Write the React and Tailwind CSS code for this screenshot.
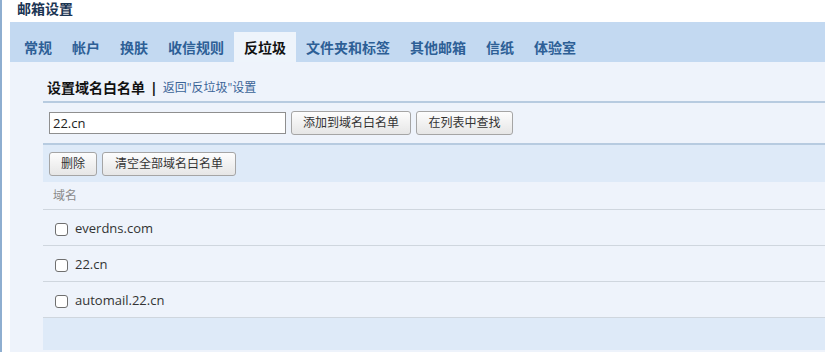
const TABS = ["常规", "帐户", "换肤", "收信规则", "反垃圾", "文件夹和标签", "其他邮箱", "信纸", "体验室"];
const DOMAINS = ["everdns.com", "22.cn", "automail.22.cn"];

function Btn({ children, className = "" }) {
  return (
    <button
      className={`h-[24px] px-0 whitespace-nowrap rounded-[3px] border border-[#a5a5a5] bg-gradient-to-b from-[#fdfdfd] to-[#e6e6e6] text-[12px] text-[#333] leading-none ${className}`}
    >
      {children}
    </button>
  );
}

export default function App() {
  return (
    <div
      className="w-[825px] h-[352px] overflow-hidden bg-white border-l-2 border-[#8eaed0] flex flex-col"
      style={{ fontFamily: '"Open Sans", "Noto Sans CJK SC", sans-serif' }}
    >
      <div className="h-[22px] pl-[15px] pt-[1px] text-[14px] leading-[16px] font-bold text-[#1b3553]">邮箱设置</div>

      <div className="ml-[8px] flex-1 flex flex-col">
        {/* tabs */}
        <div className="h-[40px] bg-[#c3d9f1] flex items-end pl-[4px]">
          {TABS.map((t) => (
            <div
              key={t}
              className={
                t === "反垃圾"
                  ? "h-[30px] px-[10px] flex items-center text-[14px] font-bold text-[#111] bg-[#eef4fb]"
                  : "h-[30px] px-[10px] flex items-center text-[14px] font-bold text-[#2d5f96]"
              }
            >
              {t}
            </div>
          ))}
        </div>

        {/* content */}
        <div className="flex-1 bg-[#eef3fb] pl-[33px]">
          <div className="h-[39px] pl-[4px] pt-[12px] flex items-center">
            <span className="text-[14px] font-bold text-[#111]">设置域名白名单</span>
            <span className="mx-[5px] text-[14px] font-bold text-[#111]">|</span>
            <span className="text-[12px] text-[#3a6497]">返回"反垃圾"设置</span>
          </div>
          <div className="h-[2px] bg-[#b7cbe0]" />

          <div className="h-[40px] pl-[6px] flex items-center gap-[5px]">
            <input
              defaultValue="22.cn"
              className="w-[237px] h-[22px] border border-[#8f8f8f] bg-white px-[3px] text-[13px] text-[#222] outline-none"
            />
            <Btn className="w-[120px]">添加到域名白名单</Btn>
            <Btn className="w-[97px]">在列表中查找</Btn>
          </div>
          <div className="h-[2px] bg-[#b7cbe0]" />

          <div className="h-[37px] bg-[#deeaf8] pl-[6px] flex items-center gap-[5px]">
            <Btn className="w-[48px]">删除</Btn>
            <Btn className="w-[134px]">清空全部域名白名单</Btn>
          </div>

          <div className="h-[28px] pl-[10px] flex items-center text-[12px] text-[#8a8a8a] border-b border-[#cfd6de]">域名</div>

          {DOMAINS.map((d) => (
            <div key={d} className="h-[36px] pl-[12px] pt-[3px] flex items-center border-b border-[#cfd6de]">
              <span className="w-[13px] h-[13px] rounded-[3px] border border-[#6f6f6f] bg-white" />
              <span className="ml-[7px] text-[13px] text-[#333]">{d}</span>
            </div>
          ))}

          <div className="h-[32px] bg-[#deeaf8]" />
        </div>
      </div>
    </div>
  );
}
